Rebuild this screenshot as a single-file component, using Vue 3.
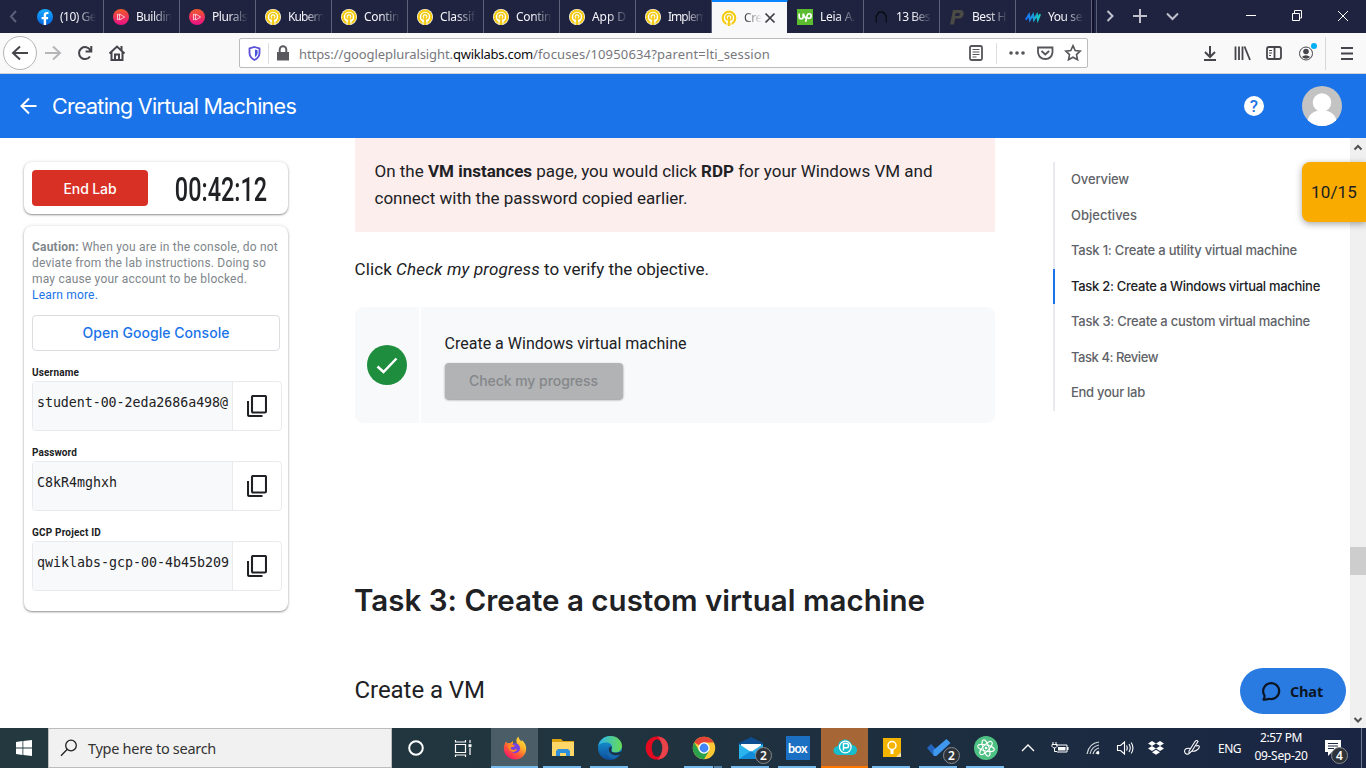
<script setup>
const vFit = {
  mounted(el, { value }) {
    const w = el.getBoundingClientRect().width
    el.style.letterSpacing = (value - w) / el.textContent.length + 'px'
  }
}

const qwik = '<circle cx="8" cy="8" r="8" fill="#fff"/><circle cx="8" cy="8" r="6.3" fill="none" stroke="#f4cb16" stroke-width="2.2"/><circle cx="8" cy="7.6" r="3.1" fill="none" stroke="#f4cb16" stroke-width="1.5"/><path d="M6.8 8.5h2.4V16H6.8z" fill="#f4cb16"/><path d="M6 10v5.6M10 10v5.6" stroke="#fff" stroke-width="1"/><circle cx="8" cy="7.8" r="1.3" fill="#f4cb16"/>'
const plural = '<defs><linearGradient id="pg" x2="0" y2="1"><stop stop-color="#f15b2a"/><stop offset="1" stop-color="#ec0f88"/></linearGradient></defs><circle cx="8" cy="8" r="8" fill="url(#pg)"/><path d="M6.600 5v6l5-3zM4.500 5.200v5.600L6.600 9.600M4.500 5.200l2.100 1.200" fill="none" stroke="#fff" stroke-opacity=".85" stroke-width=".8"/>'
const tabs = [
  { t: '(10) Ge', w: 36, i: '<defs><linearGradient id="fb" x2="0" y2="1"><stop stop-color="#18acfe"/><stop offset="1" stop-color="#0163e0"/></linearGradient></defs><circle cx="8" cy="8" r="8" fill="url(#fb)"/><path d="M6.7 16v-5.7H4.6V8h2.1V6.3c0-2.2 1.2-3.3 3.1-3.3.8 0 1.6.1 1.6.1V5h-1c-1 0-1.3.6-1.3 1.3V8h2.2l-.4 2.3H9.1V16z" fill="#fff"/>' },
  { t: 'Buildin', w: 36, i: plural }, { t: 'Plurals', w: 35, i: plural },
  { t: 'Kubern', w: 36, i: qwik }, { t: 'Contin', w: 35, i: qwik }, { t: 'Classif', w: 35, i: qwik },
  { t: 'Contin', w: 35, i: qwik }, { t: 'App D', w: 34, i: qwik }, { t: 'Implem', w: 38, i: qwik },
  { t: 'Cre', w: 18, i: qwik, active: true },
  { t: 'Leia A.', w: 35, i: '<path fill="#5bbc2f" d="M0 0h16v16H0z"/><path d="M2.2 4.5v3.2c0 2.7 4 2.7 4 0V4.5M6.2 4.5c.6 2.8 1.5 4 3 5M8.7 12.8l1.2-5.700c.7-3.400 4.500-2.800 4.300 0-.2 2.500-2.800 2.800-4.500 1.300" fill="none" stroke="#fff" stroke-width="1.7"/>' },
  { t: '13 Bes', w: 34, i: '<path d="M3.2 13.500V7.200L6 3.200h4.400l2.800 4v6.300" fill="none" stroke="#07080d" stroke-width="1.200"/>' },
  { t: 'Best H', w: 34, i: '<path d="M1 15.500 4 1h7.500c5 0 4 8.500-1.500 8.500H6.200L5 15.500zM6.800 4l-.8 3h3c2.300 0 2.500-3 .5-3z" fill="#4b4b45" fill-rule="evenodd"/>' },
  { t: 'You se', w: 34, i: '<defs><linearGradient id="mg"><stop stop-color="#1769ff"/><stop offset="1" stop-color="#19cfb9"/></linearGradient></defs><path d="m.8 10.700 3.200-5 1 5 3-5 1 5 3-5 .9 5 2.200-5.600" fill="none" stroke="url(#mg)" stroke-width="2"/>' }
]

const creds = [
  { label: 'Username', lw: 47, value: 'student-00-2eda2686a498@', w: 191 },
  { label: 'Password', lw: 45, value: 'C8kR4mghxh', w: 80 },
  { label: 'GCP Project ID', lw: 69, value: 'qwiklabs-gcp-00-4b45b209', w: 192 }
]

const toc = [
  ['Overview', 58], ['Objectives', 66], ['Task 1: Create a utility virtual machine', 226],
  ['Task 2: Create a Windows virtual machine', 249], ['Task 3: Create a custom virtual machine', 239],
  ['Task 4: Review', 87], ['End your lab', 74]
]

const apps = [
  { n: 'cortana', i: '<circle cx="12" cy="12" r="6.800" fill="none" stroke="#fff" stroke-width="2"/>' },
  { n: 'tasks', i: '<path d="M4.500 8.500h10v8h-10zM4.500 4v2h10V4M4.500 21v-2h10v2M19 4v3M19 12v7" fill="none" stroke="#fff" stroke-width="1.200"/><path d="M17.500 8.200h3v3h-3z" fill="#fff"/>' },
  { n: 'firefox', on: true, cls: 'focus', i: '<defs><linearGradient id="ff" x1="1" x2=".3" y2="1"><stop stop-color="#fff34f"/><stop offset=".4" stop-color="#ffb52a"/><stop offset=".7" stop-color="#ff5a36"/><stop offset="1" stop-color="#f5156c"/></linearGradient></defs><path d="M3.200 5.200c.2 1 .6 1.600 1 2.100.8-.3 2-.4 2.900 0L10 5c-.2 2 .2 2.600 1 3.200l3-.7C12.600 4.500 13.600 2 15.400.4c.2 2.700 2 3.500 3 5l.4-1.500c3 2.400 4.400 5.600 4.400 8.600C23.200 19 18.300 23.500 12.100 23.500S.8 18.500.8 12.500c0-3 1-5.500 2.400-7.300z" fill="url(#ff)"/><circle cx="12" cy="12.300" r="5" fill="#7542e5"/><path d="M5.500 9c3-1.500 5.500 0 6.500 1-1.500 1.500-4 .500-4.500 2 .5 1.600 2.500 2.500 4.500 1.500 1-.500 2-.3 2 .3-1.500 2.500-5.500 3-7.500.2C5 12.500 5 10.500 5.500 9z" fill="#ff8b22"/>' },
  { n: 'files', on: true, cls: 'gap', i: '<path d="M1 3h9l2 2h11v15H1z" fill="#dda20f"/><path d="M1 6h22v14H1z" fill="#ffd768"/><path d="M5 20v-5l2-2h10l2 2v5h-4v-3H9v3z" fill="#2f91dc"/>' },
  { n: 'edge', on: true, i: '<defs><linearGradient id="ea"><stop stop-color="#2cb3ed"/><stop offset="1" stop-color="#68dc54"/></linearGradient><linearGradient id="eb" x2="0" y2="1"><stop stop-color="#179ed8"/><stop offset="1" stop-color="#0c4d9c"/></linearGradient></defs><circle cx="12" cy="12" r="12" fill="url(#eb)"/><path d="M.2 10C1.500 4 6.500 0 12.500 0 19.500 0 24 5 24 10c0 4.500-3.500 6.500-7 6.500-2.500 0-4-1-4-2.500 0-1 1-1.500 1-3 0-2.500-2.500-4.500-6-4.500C4 6.500 1.200 8 .2 10z" fill="url(#ea)"/><path d="M14 14c-2 4 3 6 8.500 3-1.500 3-4 5-7 5.800C8 22 7 15 10.500 11.500c1.500-1 3 0 3.500 2.500z" fill="#1767ad"/><path d="M13.700 10.500c.5 2-1 2.500-.7 4 .5 2.500 5 3 11 1-.4 1.200-.8 1.800-1.400 2.700-4 1.500-8 1.500-10.600-1.700-2-2.300-1-6 1.700-6z" fill="#193142"/>' },
  { n: 'opera', i: '<ellipse cx="12" cy="12" rx="11.300" ry="11.500" fill="#e40b20"/><path d="M12 .5c15 0 15 23 0 23 6-1 6-22 0-23z" fill="#e8424a"/><ellipse cx="12" cy="12" rx="5.300" ry="8.800" fill="#20333f"/>' },
  { n: 'chrome', on: true, cls: 'stack', i: '<circle cx="12" cy="12" r="11.200" fill="#fcc934"/><path d="M12 12 2.300 6.400A11.200 11.200 0 0 1 21.700 6.400H12z" fill="#e34435"/><path d="M2.300 6.400A11.200 11.200 0 0 0 12 23.200l5-8.300L7.200 14.800z" fill="#2aa14c"/><circle cx="12" cy="12" r="5.700" fill="#fff"/><circle cx="12" cy="12" r="4.400" fill="#4285f4"/>' },
  { n: 'mail', on: true, badge: 2, i: '<path d="M0 7 12 1l12 6v15H0z" fill="#0c4c91"/><path d="M2 8h20v9H2z" fill="#fff"/><path d="M0 8l12 8 12-8v15H0z" fill="#29b4ed"/><path d="m0 23 12-8 12 8z" fill="#128bd8"/>' },
  { n: 'box', on: true, text: 'box', i: '<path d="M0 0h24v24H0z" fill="#1c70c4"/>' },
  { n: 'pcloud', on: true, cls: 'alert', i: '<path d="M6 19C-1 19-1.500 11 5 10 6 1.500 17 1.500 19 9c6.500 0 7 10 0 10z" fill="#18bdcc"/><circle cx="12.300" cy="11" r="5.800" fill="#18bdcc" stroke="#fff" stroke-width="1.300"/><path d="M10.500 14.500v-7h2.800c3 0 3 4.300 0 4.300h-2.800" fill="none" stroke="#fff" stroke-width="1.500"/>' },
  { n: 'keep', on: true, i: '<path d="M3 2h18v14l-4 5H3z" fill="#f5b400"/><path d="M21 16v5h-5z" fill="#fce19b"/><circle cx="12" cy="9.500" r="4" fill="none" stroke="#fff" stroke-width="1.500"/><path d="M10.500 13h3v5h-3z" fill="#fff"/>' },
  { n: 'todo', on: true, badge: 2, i: '<path d="m0 12 4-4 6 6-3.500 5.500z" fill="#2464bd"/><path d="m6.500 19.500-.2-5.300L19.500 3 23.500 7 10 19.500q-2 1-3.500 0z" fill="#3f98ed"/>' },
  { n: 'atom', on: true, i: '<circle cx="12" cy="12" r="12" fill="#4fc083"/><g fill="none" stroke="#fff" stroke-width="1"><ellipse cx="12" cy="12" rx="3" ry="8.500" transform="rotate(-18 12 12)"/><ellipse cx="12" cy="12" rx="3" ry="8.500" transform="rotate(43 12 12)"/><ellipse cx="12" cy="12" rx="3" ry="8.500" transform="rotate(103 12 12)"/></g><circle cx="12" cy="12" r="1.300" fill="#fff"/>' }
]

const tray = [
  { n: 'up', i: '<path d="m3 12 6-6 6 6" fill="none" stroke="#fff" stroke-width="1.300"/>' },
  { n: 'bat', i: '<path d="M5 6h11v7H6" fill="none" stroke="#fff"/><path d="M7 8h7.500v3.500H7zM16 8h1.500v3H16z" fill="#fff"/><path d="M2 3v2.500M5 3v2.500M1 5.500h5v2q-1 1.500-2.500 1.500T1 7.500zM3.500 9v3.500H6" fill="none" stroke="#fff"/>' },
  { n: 'wifi', i: '<g fill="none" stroke="#d4dade" stroke-width="1.200"><path d="M3 15C4 9 8 4 15 3"/><path d="M6 15c1-5 4-8 9-9M9 15c.8-3 2.500-5 6-6M12 15c.3-1.500 1.200-2.500 3-3"/></g><circle cx="14" cy="14" r="1.400" fill="#fff"/>' },
  { n: 'vol', i: '<path d="M1.500 6.500h3L8.500 3v12L4.500 11.500h-3zM10.500 6.500q1.500 2.500 0 5M13 5q2.500 4 0 8M15.200 3.500q3.500 5.500 0 11" fill="none" stroke="#fff" stroke-width="1.100"/>' },
  { n: 'drop', i: '<path d="m5 2 4 2.500L5 7 1 4.500zM13 2l4 2.500L13 7 9 4.500zM5 7l4 2.500L5 12 1 9.500zM13 7l4 2.500L13 12 9 9.500zM9 10.800l4 2.400L9 15.700l-4-2.500z" fill="#fff"/>' },
  { n: 'pen', i: '<path d="M6 12 12 2.500q2-2 3 0L9 12l-3 2.500zM7.500 9.500q-6-1-6 3 1 4 5 2M13 7c3-1 4 0 3 2s-5 4-7 3" fill="none" stroke="#fff" stroke-width="1.100"/>' }
]
</script>

<template>
  <div class="screen">
    <header class="tabbar">
      <svg class="prev" width="28" height="33" viewBox="0 0 28 33"><path d="m16 11-5 5.500 5 5.500" fill="none" stroke="#5d5f78" stroke-width="2" /></svg>
      <div v-for="(t, k) in tabs" :key="k" class="tab" :class="{ active: t.active }">
        <svg width="16" height="16" viewBox="0 0 16 16" v-html="t.i"></svg>
        <div class="tabtext"><span v-fit="t.w">{{ t.t }}</span></div>
        <svg v-if="t.active" class="close" width="12" height="12" viewBox="0 0 12 12"><path d="m1.500 1.500 9 9m0-9-9 9" stroke="#3c3c42" stroke-width="1.700" /></svg>
      </div>
      <svg class="winctl" width="270" height="33" viewBox="0 0 270 33" fill="none">
        <path d="M1 0v33" stroke="#11132a" stroke-width="2" /><path d="M4.500 0v33" stroke="#5c5e75" />
        <path d="m15.500 11 5 5-5 5M41 16h14M48 9v14M75 13.500l5.500 5.500 5.500-5.500" stroke="#c0c1cc" stroke-width="2" />
        <path d="M154 15.500h10M200.500 13.500h7v7h-7zM202.500 13v-2.500h7v7.500h-2M246 11l10 10m0-10-10 10" stroke="#fff" />
      </svg>
    </header>

    <nav class="toolbar">
      <svg width="239" height="40" viewBox="0 0 239 40" fill="none" stroke="#45454b" stroke-width="2">
        <circle cx="20" cy="20" r="16.500" fill="#fff" stroke="#b5b5b7" stroke-width="1" />
        <path d="M28 20H13m7-6.500L13 20l7 6.500" />
        <path d="M45 20h15m-7-6.500 7 6.500-7 6.500" stroke="#b6b6b8" />
        <path d="M90 23.500a6 6 0 1 1 .3-6.300M91.300 13v5.500h-5.700" />
        <path d="m109.500 20.500 7.500-7 7.500 7M111.500 19v8h11v-8M121.500 13v4" /><path d="M115 27v-5.500h4V27" />
      </svg>
      <div class="urlbar">
        <svg width="58" height="28" viewBox="0 0 58 28">
          <path d="m14.500 8 5 1.500v4.500q0 4.500-5 7-5-2.500-5-7V9.500z" fill="none" stroke="#5a4fd8" stroke-width="1.800" /><path d="M15 10.500v7.800q2.600-1.500 2.600-4.300v-2.700z" fill="#4354d8" />
          <path d="M28.500 4v21" stroke="#ddd" /><path d="M37 13h12v8.500H37z" fill="#5a5a5e" /><path d="M39.700 13v-2.500a3.300 3.300 0 0 1 6.600 0V13" fill="none" stroke="#5a5a5e" stroke-width="1.900" />
        </svg>
        <div class="url"><span v-fit="154">https://googlepluralsight.</span><b v-fit="80">qwiklabs.com</b><span v-fit="237">/focuses/10950634?parent=lti_session</span></div>
        <svg class="urlicons" width="127" height="28" viewBox="0 0 127 28" fill="none" stroke="#55555a" stroke-width="1.800">
          <rect x="10" y="7" width="12" height="14" rx="1.500" /><path d="M12.500 10.500h7M12.500 13h7M12.500 15.500h7M12.500 18h4" stroke-width="1" />
          <path d="M36.500 4v21" stroke="#ddd" stroke-width="1" />
          <g fill="#55555a" stroke="none"><circle cx="51" cy="14" r="1.800" /><circle cx="57" cy="14" r="1.800" /><circle cx="63" cy="14" r="1.800" /></g>
          <path d="M78 8.500h14.500v5q-1 6.500-7.200 6.500T78 13.500zM81.500 12l3.800 3.500 3.800-3.500" />
          <path d="m113 6.700 2.200 4.800 5 .6-3.700 3.500 1 5.200-4.500-2.600-4.500 2.600 1-5.200-3.700-3.500 5-.6z" stroke-width="1.600" />
        </svg>
      </div>
      <svg class="tools" width="178" height="40" viewBox="0 0 178 40" fill="none" stroke="#45454b" stroke-width="2">
        <path d="M22 13v11m-5-5 5 5 5-5M16 27h12" />
        <path d="M47.500 13.500V27M51 13.500V27M54.500 13.500V27M56.500 13.500 62 27" stroke-width="1.800" />
        <rect x="79" y="14" width="14" height="12" rx="2" stroke-width="1.800" /><path d="M86.500 14v12" stroke-width="1.800" /><path d="M81 17.500h3M81 20h3M81 22.500h2" stroke-width="1" />
        <circle cx="118" cy="20.500" r="6.500" stroke-width="1" /><circle cx="118" cy="18.500" r="2.800" fill="#45454b" stroke="none" /><path d="M113.800 24q4-3.500 8.400 0-4 3.500-8.400 0z" fill="#45454b" stroke="none" /><circle cx="126" cy="13" r="3" fill="#00aef3" stroke="none" />
        <path d="M137.500 4v33" stroke="#d8d8da" stroke-width="1" />
        <path d="M153 15h12M153 20.500h12M153 26h12" />
      </svg>
    </nav>

    <section class="appbar">
      <svg width="18" height="18" viewBox="0 0 18 18"><path d="M16.500 9H1.500m7.500-7.500L1.500 9 9 16.500" fill="none" stroke="#fff" stroke-width="2" /></svg>
      <h1><span v-fit="244">Creating Virtual Machines</span></h1>
      <div class="help">?</div>
      <svg class="avatar" width="40" height="40" viewBox="0 0 40 40"><defs><clipPath id="av"><circle cx="20" cy="20" r="20" /></clipPath></defs><g clip-path="url(#av)"><path fill="#c3c3c3" d="M0 0h40v40H0z" /><circle cx="20" cy="16.500" r="9.300" fill="#fff" /><ellipse cx="20" cy="36" rx="14.500" ry="12" fill="#fff" /></g></svg>
    </section>

    <main class="page">
      <aside class="side">
        <div class="card timer">
          <button class="end"><span v-fit="53">End Lab</span></button>
          <div class="clockbox"><span class="digits">00:42:12</span></div>
        </div>
        <div class="card panel">
          <p class="caution">
            <span v-fit="246"><b>Caution:</b> When you are in the console, do not</span>
            <span v-fit="234">deviate from the lab instructions. Doing so</span>
            <span v-fit="215">may cause your account to be blocked.</span>
            <span v-fit="66" class="link">Learn more.</span>
          </p>
          <button class="open"><span v-fit="147">Open Google Console</span></button>
          <div v-for="c in creds" :key="c.label" class="cred">
            <div class="label"><span v-fit="c.lw">{{ c.label }}</span></div>
            <div class="field">
              <div class="value"><span v-fit="c.w">{{ c.value }}</span></div>
              <div class="copy"><svg width="20" height="22" viewBox="0 0 20 22" fill="none" stroke="#202124" stroke-width="2.100"><rect x="5" y="1" width="14" height="16.500" rx="1" /><path d="M1 6v13.500q0 1.500 1.500 1.500H15.500" /></svg></div>
            </div>
          </div>
        </div>
      </aside>

      <article class="doc">
        <div class="note">
          <span v-fit="558">On the <b>VM instances</b> page, you would click <b>RDP</b> for your Windows VM and</span>
          <span v-fit="313">connect with the password copied earlier.</span>
        </div>
        <p class="verify"><span v-fit="37.500">Click</span><i v-fit="144">Check my progress</i><span v-fit="165">to verify the objective.</span></p>
        <div class="step">
          <div class="status"><svg width="40" height="40" viewBox="0 0 40 40"><circle cx="20" cy="20" r="20" fill="#1e8e3e" /><path d="m10.500 21.500 6 5.500L29.500 13.500" fill="none" stroke="#fff" stroke-width="2.500" /></svg></div>
          <div class="stepbody">
            <div class="steptitle"><span v-fit="242">Create a Windows virtual machine</span></div>
            <button class="check"><span v-fit="129">Check my progress</span></button>
          </div>
        </div>
        <h2><span v-fit="571">Task 3: Create a custom virtual machine</span></h2>
        <h3><span v-fit="130.500">Create a VM</span></h3>
      </article>

      <nav class="toc">
        <div v-for="(t, k) in toc" :key="t[0]" class="tocitem" :class="{ current: k === 3 }"><span v-fit="t[1]">{{ t[0] }}</span></div>
      </nav>

      <div class="scroll">
        <svg width="16" height="16" viewBox="0 0 16 16"><path d="m4.500 9.500 3.500-3.500 3.500 3.500" fill="none" stroke="#505050" stroke-width="2" /></svg>
        <div class="thumb"></div>
        <svg width="16" height="16" viewBox="0 0 16 16"><path d="m4.500 7 3.500 3.500L11.500 7" fill="none" stroke="#505050" stroke-width="2" /></svg>
      </div>

      <div class="score"><span v-fit="46">10/15</span></div>
      <button class="chat">
        <svg width="20" height="20" viewBox="0 0 20 20"><path d="M2.500 14.500A8 8 0 1 1 7 17.800q-2.500 1-5.500.8 1.200-1.800 1-4.100z" fill="none" stroke="#0b1524" stroke-width="2.200" stroke-linejoin="round" /></svg>
        <span v-fit="33">Chat</span>
      </button>
    </main>

    <footer class="taskbar">
      <div class="start"><svg width="16" height="16" viewBox="0 0 16 16"><path d="m0 2 6.500-1v6.500H0zM7.300.9 16 0v7.500H7.300zM0 8.400h6.500v6.500L0 14zM7.300 8.400H16V16l-8.700-1z" fill="#fff" /></svg></div>
      <div class="search">
        <svg width="18" height="18" viewBox="0 0 18 18" fill="none" stroke="#222" stroke-width="1.300"><circle cx="11" cy="6.500" r="5.300" /><path d="M7.300 10.300 1 16.700" /></svg>
        <span v-fit="128">Type here to search</span>
      </div>
      <div class="apps">
        <div v-for="a in apps" :key="a.n" class="app" :class="[a.cls, { on: a.on }]">
          <svg width="24" height="24" viewBox="0 0 24 24" v-html="a.i"></svg>
          <span v-if="a.text" class="boxtext">{{ a.text }}</span>
          <span v-if="a.badge" class="badge">{{ a.badge }}</span>
        </div>
      </div>
      <div class="tray">
        <svg v-for="t in tray" :key="t.n" :class="t.n" width="18" height="18" viewBox="0 0 18 18" v-html="t.i"></svg>
        <span class="lang"><span v-fit="23">ENG</span></span>
        <div class="clock"><span v-fit="42">2:57 PM</span><span v-fit="53">09-Sep-20</span></div>
        <div class="notif">
          <svg width="18" height="18" viewBox="0 0 18 18"><path d="M1 1h16v12H8l-4 4v-4H1z" fill="#fff" /><path d="M4 4.500h10M4 7h10M4 9.500h6" stroke="#1c2a40" /></svg>
          <span class="badge">4</span>
        </div>
      </div>
    </footer>
  </div>
</template>

<style>
body { margin: 0; overflow: hidden; }
</style>

<style scoped>
* { box-sizing: border-box; }
.screen { width: 1366px; height: 768px; display: flex; flex-direction: column; overflow: hidden; background: #fff; font-family: Roboto, sans-serif; color: #202124; }
span { white-space: nowrap; }
svg { display: block; flex: none; }
button { border: 0; padding: 0; margin: 0; display: flex; align-items: center; justify-content: center; font: 500 14px Inter, sans-serif; }

.tabbar { height: 33px; background: #202340; display: flex; flex: none; font: 12px "Noto Sans", "Open Sans", sans-serif; color: #f5f5fa; }
.tab { width: 76px; height: 33px; flex: none; display: flex; align-items: center; padding: 1px 0 0 9px; border-right: 1px solid #606178; }
.tabtext { width: 36px; margin-left: 7px; line-height: 18px; -webkit-mask-image: linear-gradient(90deg, #000 45%, transparent); mask-image: linear-gradient(90deg, #000 45%, transparent); }
.tab.active { background: #f8f8fa; color: #333; border-top: 2px solid #0a84ff; padding-top: 0; border-right: 1px solid #202340; background-clip: padding-box; }
.active .tabtext { width: 18px; -webkit-mask-image: linear-gradient(90deg, #000, transparent); mask-image: linear-gradient(90deg, #000, transparent); }
.close { margin-left: 2px; }
.winctl { flex: none; }

.toolbar { height: 41px; flex: none; background: #f9f9fa; border-bottom: 1px solid #d2d2d4; display: flex; }
.urlbar { width: 849px; height: 30px; margin-top: 5px; border: 1px solid #bcbcbe; border-radius: 2px; background: #fff; display: flex; align-items: center; }
.url { display: flex; font: 13px/20px "Noto Sans", "Open Sans", sans-serif; color: #77777c; margin: 1px 0 0 1px; }
.url b { font-weight: 400; color: #0c0c0d; }
.urlicons { margin-left: auto; }
.tools { margin-left: 100px; }

.appbar { height: 64px; flex: none; background: #1a73e8; display: flex; align-items: center; padding: 0 24px 0 20px; color: #fff; }
h1 { font: 400 21.500px Inter, sans-serif; margin: 0 0 1px 14px; width: 300px; }
.help { width: 20px; height: 20px; border-radius: 50%; background: #fff; color: #1a73e8; font: 500 17px/21px Roboto, sans-serif; text-align: center; margin-left: auto; }
.avatar { margin-left: 38px; }

.page { height: 590px; position: relative; display: flex; overflow: hidden; flex: none; }
.side { width: 264px; margin-left: 24px; padding-top: 24px; flex: none; }
.card { background: #fff; border-radius: 8px; box-shadow: 0 1px 2px rgba(0,0,0,.4), 0 0 4px rgba(0,0,0,.1); }
.timer { height: 52px; display: flex; padding: 8px; }
.end { width: 116px; height: 36px; background: #d93025; color: #fff; border-radius: 4px; }
.clockbox { width: 132px; display: flex; justify-content: center; align-items: center; padding: 3px 0 0 14px; }
.digits { display: block; font-size: 33px; line-height: 38px; font-weight: 500; transform: scaleX(.71); }
.panel { height: 385px; margin-top: 12px; padding: 13px 6px 0 8px; }
.caution { margin: 0; display: flex; flex-direction: column; align-items: flex-start; font-size: 12px; line-height: 16px; color: #80868b; }
.link { color: #1a73e8; }
.open { width: 248px; height: 36px; margin-top: 12px; padding-bottom: 1px; border: 1px solid #dadce0; border-radius: 4px; background: #fff; color: #1a73e8; }
.cred { height: 80px; }
.open + .cred { margin-top: 14px; }
.label { font-size: 10px; font-weight: 700; line-height: 16px; height: 16px; }
.field { width: 250px; height: 50px; border: 1px solid #e8eaed; border-radius: 4px; display: flex; overflow: hidden; }
.value { width: 200px; background: #f8f9fa; border-right: 1px solid #e8eaed; padding: 12px 0 0 4px; font: 13.300px/18px "DejaVu Sans Mono", monospace; color: #202124; }
.copy { flex: 1; display: flex; align-items: center; justify-content: center; }

.doc { width: 640px; margin-left: 67px; flex: none; }
.note { height: 94px; background: #fceeed; border-radius: 0 0 2px 2px; padding: 20px 19.500px; font-size: 17px; line-height: 27px; display: flex; flex-direction: column; align-items: flex-start; }
.verify { margin: 24px 0 0 -.500px; height: 27px; font-size: 17px; line-height: 27px; display: flex; gap: 4px; white-space: nowrap; }
.step { height: 116px; margin-top: 24px; display: flex; gap: 2px; border-radius: 8px; overflow: hidden; }
.status { width: 64px; background: #f8f9fa; display: flex; align-items: center; justify-content: center; }
.stepbody { flex: 1; background: #f8f9fa; padding: 24px 23.500px; }
.steptitle { font-size: 16px; line-height: 26px; height: 32px; }
.check { width: 178px; height: 36px; padding-bottom: 1px; border-radius: 4px; background: #b1b3b5; color: #85878a; box-shadow: 0 1px 2px rgba(0,0,0,.3), 0 1px 3px rgba(0,0,0,.15); }
h2 { font: 600 29.500px/40px Inter, sans-serif; margin: 157px 0 0 -1px; }
h3 { font: 400 24px/32px Roboto, sans-serif; margin: 54px 0 0 -.500px; }

.toc { width: 290px; height: 249px; margin: 24px 0 0 58px; font: 500 13px/35.500px Inter, sans-serif; color: #5f6368; flex: none; }
.tocitem { height: 35.500px; padding-left: 16px; border-left: 2px solid #e8eaed; }
.current { color: #202124; border-left-color: #1a73e8; }
.scroll { width: 16px; height: 590px; margin-left: auto; background: #f0f0f0; display: flex; flex-direction: column; padding: 2px 0 1px; }
.thumb { height: 28px; background: #cdcdcd; margin: 391px 0 auto; }
.score { position: absolute; left: 1302px; top: 24px; width: 64px; height: 60px; background: #f9ab00; border-radius: 8px 0 0 8px; box-shadow: 0 2px 7px rgba(0,0,0,.35); font-size: 17px; line-height: 60px; padding-left: 9px; }
.chat { position: absolute; left: 1240px; top: 530px; width: 106px; height: 46px; border-radius: 23px; background: #2a7be1; color: #0b1524; font: 700 14.500px "Open Sans", "Noto Sans", sans-serif; gap: 8px; padding-right: 1px; }

.taskbar { height: 40px; flex: none; display: flex; background: linear-gradient(90deg, #23393f, #20343f 45%, #1c2c40 75%, #1a2544); color: #fff; font-family: "Noto Sans", "Open Sans", sans-serif; }
.start { width: 48px; display: flex; align-items: center; justify-content: center; }
.search { width: 344px; background: #f1f1f1; border: 1px solid #bdbdbd; display: flex; align-items: center; padding-left: 11px; gap: 10px; font-size: 14.500px; color: #333; }
.apps { display: flex; }
.app { width: 47px; height: 40px; position: relative; display: flex; align-items: center; justify-content: center; flex: none; }
.app.on::after { content: ""; position: absolute; left: 4px; right: 5px; bottom: 0; height: 2px; background: #76b9ed; }
.app.focus { background: #4b5d66; margin-left: 5px; }
.app.gap { margin-left: 1px; }
.app.focus::after, .app.alert::after { left: 0; right: 0; }
.app.stack::after { background: linear-gradient(90deg, #76b9ed 29px, #20343f 29px, #20343f 30px, #5583a8 30px); }
.app.alert { background: #a66635; }
.app.alert::after { background: #ff7800; }
.boxtext { position: absolute; font: 700 12.500px Lato, sans-serif; letter-spacing: -.500px; }
.badge { position: absolute; left: 28px; top: 19px; width: 17px; height: 17px; border-radius: 50%; background: #2d3338; border: 1px solid #858b90; font-size: 12px; font-weight: 600; line-height: 15px; text-align: center; }
.tray { display: flex; align-items: center; margin-left: auto; width: 347px; }
.tray > svg { margin-right: 14px; flex: none; }
.tray > .vol { margin-right: 13px; }
.tray > .bat { margin-right: 15px; }
.tray > .drop { margin-right: 18px; }
.tray > .pen { margin-right: 17px; }
.lang { font-size: 12px; width: 36px; flex: none; }
.clock { width: 54px; display: flex; flex-direction: column; align-items: center; font-size: 12px; line-height: 18px; height: 38px; flex: none; }
.notif { position: relative; margin-left: 16px; height: 40px; width: 38px; padding-top: 11px; border-right: 1px solid #6f7990; flex: none; }
.notif .badge { left: 7px; top: 19px; }
</style>
